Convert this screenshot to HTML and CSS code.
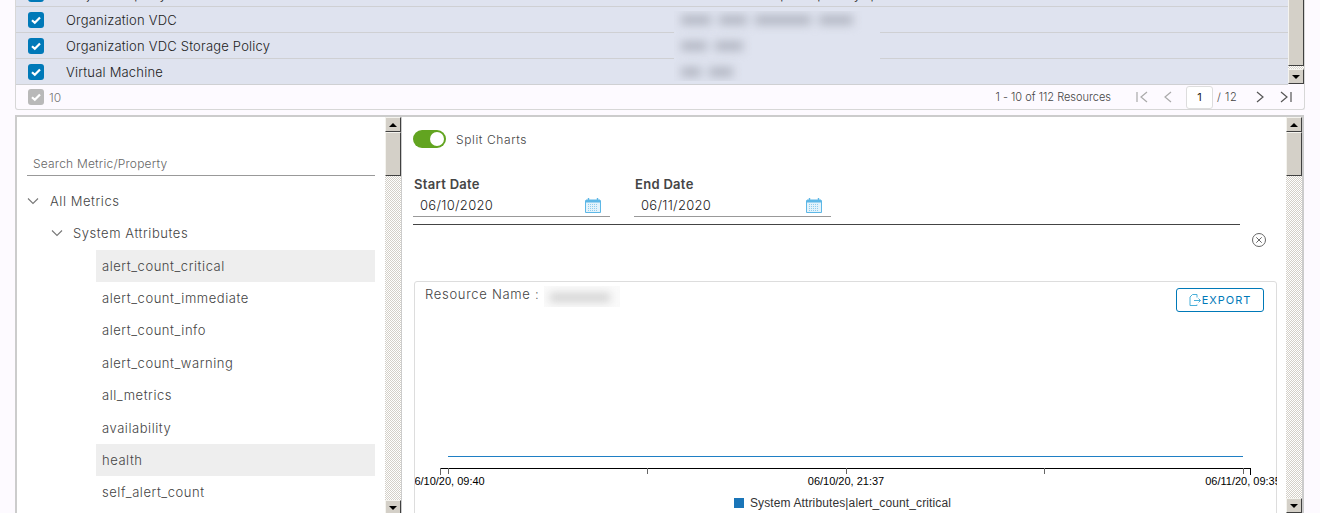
FILE: index.html
```html
<!DOCTYPE html>
<html lang="en">
<head>
    <meta charset="UTF-8">
    <title>Metrics</title>
    <link rel="stylesheet" href="styles.css">
</head>
<body>
    <svg class="defs" width="0" height="0">
        <symbol id="check" viewBox="0 0 16 16"><path d="M4 8.2l2.8 2.6L12 5.4" fill="none" stroke="#fff" stroke-width="2.2"/></symbol>
        <symbol id="cal" viewBox="0 0 16 15"><path d="M.5 2.5h15v12H.5z" fill="#e4f3fb" stroke="#5db7e6"/><path d="M1 1.5h14v3H1z" fill="#5db7e6"/><path d="M3.5 0v3M12.5 0v3" stroke="#5db7e6" stroke-width="1.4"/><path d="M3 6.5h10M3 8.5h10M3 10.5h10M3 12.5h10" stroke="#8ecdee" stroke-dasharray="1 1"/></symbol>
        <symbol id="down" viewBox="0 0 12 12"><path d="M1 3.5l5 5 5-5" fill="none" stroke="#777" stroke-width="1.1"/></symbol>
    </svg>

    <section class="grid">
        <div class="grid-main">
            <div class="rows">
                <div class="row">
                    <span class="check"><svg width="16" height="16"><use href="#check"/></svg></span>
                    <span class="row-name">Project Property</span>
                    <span class="row-value">vcloud_resource_pool_quantity_q</span>
                </div>
                <div class="row">
                    <span class="check"><svg width="16" height="16"><use href="#check"/></svg></span>
                    <span class="row-name">Organization VDC</span>
                </div>
                <div class="row">
                    <span class="check"><svg width="16" height="16"><use href="#check"/></svg></span>
                    <span class="row-name">Organization VDC Storage Policy</span>
                </div>
                <div class="row">
                    <span class="check"><svg width="16" height="16"><use href="#check"/></svg></span>
                    <span class="row-name">Virtual Machine</span>
                </div>
                <div class="redact">
                    <div class="smudges"><i class="w30"></i><i class="w28"></i><i class="w56"></i><i class="w34"></i></div>
                    <div class="smudges"><i class="w26"></i><i class="w28"></i></div>
                    <div class="smudges"><i class="w20"></i><i class="w24"></i></div>
                </div>
            </div>
            <div class="scrollbar grid-scroll">
                <div class="sb-thumb"></div>
                <div class="sb-track"></div>
                <div class="sb-btn"><span class="arrow-down"></span></div>
            </div>
        </div>
        <div class="grid-foot">
            <span class="check check-off"><svg width="16" height="16"><use href="#check"/></svg></span>
            <span class="foot-count">10</span>
            <span class="foot-range">1 - 10 of 112 Resources</span>
            <svg class="pg pg-first" width="14" height="14" viewBox="0 0 14 14"><path d="M2 2v10M12 2L6 7l6 5" fill="none" stroke="#aaa" stroke-width="1.2"/></svg>
            <svg class="pg pg-prev" width="14" height="14" viewBox="0 0 14 14"><path d="M10 2L4 7l6 5" fill="none" stroke="#aaa" stroke-width="1.2"/></svg>
            <span class="pg-input">1</span>
            <span class="pg-total">/ 12</span>
            <svg class="pg pg-next" width="14" height="14" viewBox="0 0 14 14"><path d="M4 2l6 5-6 5" fill="none" stroke="#555" stroke-width="1.2"/></svg>
            <svg class="pg pg-last" width="14" height="14" viewBox="0 0 14 14"><path d="M2 2l6 5-6 5M12 2v10" fill="none" stroke="#555" stroke-width="1.2"/></svg>
        </div>
    </section>

    <section class="panel">
        <aside class="tree-pane">
            <div class="search">Search Metric/Property</div>
            <div class="node node-root"><svg width="12" height="12"><use href="#down"/></svg>All Metrics</div>
            <div class="node node-sub"><svg width="12" height="12"><use href="#down"/></svg>System Attributes</div>
            <ul class="leaves">
                <li class="picked">alert_count_critical</li>
                <li>alert_count_immediate</li>
                <li>alert_count_info</li>
                <li>alert_count_warning</li>
                <li>all_metrics</li>
                <li>availability</li>
                <li class="picked">health</li>
                <li>self_alert_count</li>
            </ul>
        </aside>
        <div class="scrollbar tree-scroll">
            <div class="sb-btn"><span class="arrow-up"></span></div>
            <div class="sb-thumb"></div>
            <div class="sb-track"></div>
            <div class="sb-btn"><span class="arrow-down"></span></div>
        </div>

        <main class="chart-pane">
            <div class="toggle-row">
                <span class="toggle"><span class="knob"></span></span>
                <span class="toggle-label">Split Charts</span>
            </div>
            <div class="dates">
                <div class="date">
                    <label class="date-label">Start Date</label>
                    <div class="date-input">06/10/2020<svg width="16" height="15"><use href="#cal"/></svg></div>
                </div>
                <div class="date">
                    <label class="date-label">End Date</label>
                    <div class="date-input">06/11/2020<svg width="16" height="15"><use href="#cal"/></svg></div>
                </div>
            </div>
            <div class="rule"></div>
            <div class="close-row">
                <svg width="16" height="16" viewBox="0 0 16 16"><circle cx="8" cy="8" r="6.5" fill="none" stroke="#666"/><path d="M5.3 5.3l5.4 5.4M10.7 5.3l-5.4 5.4" stroke="#666"/></svg>
            </div>
            <div class="chart-card">
                <div class="chart-head">
                    <span class="res-name">Resource Name :</span>
                    <span class="res-blur"><i></i></span>
                    <button class="export">
                        <svg width="12" height="12" viewBox="0 0 12 12"><path d="M8 10.5v1H1V3l2.5-2.500H8v3M5 6.500h6.500M9.500 4.500l2 2-2 2" fill="none" stroke="#49afd9"/></svg>EXPORT
                    </button>
                </div>
                <svg class="chart" width="862" height="196" viewBox="0 0 862 196">
                    <path d="M33 140.500H828" stroke="#1f7fc4" fill="none"/>
                    <path d="M25 152.500H836" stroke="#000" stroke-width="1.200" fill="none"/>
                    <path d="M25.500 152v7M33.500 152v6M232.500 152v6M431.500 152v6M629.500 152v6M828.500 152v6" stroke="#666" fill="none"/>
                    <path d="M835.500 152v7" stroke="#000" fill="none"/>
                    <text x="31.500" y="169" text-anchor="middle" class="tick">06/10/20, 09:40</text>
                    <text x="431" y="169" text-anchor="middle" class="tick">06/10/20, 21:37</text>
                    <text x="828" y="169" text-anchor="middle" class="tick">06/11/20, 09:35</text>
                </svg>
                <div class="legend"><span class="swatch"></span>System Attributes|alert_count_critical</div>
            </div>
        </main>
        <div class="scrollbar chart-scroll">
            <div class="sb-btn"><span class="arrow-up"></span></div>
            <div class="sb-thumb"></div>
            <div class="sb-track"></div>
            <div class="sb-btn"><span class="arrow-down"></span></div>
        </div>
    </section>
</body>
</html>
```

FILE: styles.css
```css
html, body {
    height: 513px;
    overflow: hidden;
}

body {
    margin: 0;
    background: #fdfaff;
    font-family: "Inter", "Liberation Sans", sans-serif;
    font-size: 13px;
    color: #444;
}

.defs {
    position: absolute;
}

/* top grid */
.grid {
    width: 1290px;
    margin: -19px 0 0 15px;
    box-sizing: border-box;
    border-left: 1px solid #d7d7d7;
    border-right: 1px solid #d7d7d7;
    border-bottom: 1px solid #d7d7d7;
    border-radius: 0 0 3px 3px;
}

.grid-main {
    display: flex;
    height: 104px;
}

.rows {
    position: relative;
    flex: 1;
    background: #dfe3ef;
}

.row {
    display: flex;
    align-items: center;
    height: 26px;
    box-sizing: border-box;
    padding-left: 12px;
    border-bottom: 1px solid #cfd0d3;
    color: #222;
    font-weight: 300;
}

.row-name {
    margin-left: 22px;
    width: 608px;
    white-space: nowrap;
    letter-spacing: .2px;
}

.row-value {
    white-space: nowrap;
}

.check {
    display: block;
    width: 16px;
    height: 16px;
    flex: none;
    background: #0079b8;
    border-radius: 3px;
}

.check svg {
    display: block;
}

.check-off {
    background: #b9b9b9;
}

/* blurred out values */
.redact {
    position: absolute;
    left: 658px;
    top: 30px;
    width: 206px;
    height: 70px;
    background: #dfe3ef;
    overflow: hidden;
}

.smudges {
    display: flex;
    gap: 8px;
    height: 26px;
    align-items: center;
    padding-left: 7px;
    filter: blur(5px);
}

.smudges:first-child {
    margin-top: -4px;
}

.smudges i {
    display: block;
    height: 10px;
    background: #b4b8c4;
}

.w20 { width: 20px; }
.w24 { width: 24px; }
.w26 { width: 26px; }
.w28 { width: 28px; }
.w30 { width: 30px; }
.w34 { width: 34px; }
.w56 { width: 56px; }

.grid-foot {
    display: flex;
    align-items: center;
    height: 24px;
    padding-left: 12px;
    font-size: 11px;
    font-weight: 300;
    color: #444;
}

.foot-count {
    margin-left: 5px;
    font-size: 12px;
    color: #777;
}

.foot-range {
    margin-left: auto;
    margin-right: 24px;
}

.pg {
    flex: none;
    margin-right: 12px;
}

.pg-prev {
    margin-right: 5px;
}

.pg-input {
    width: 27px;
    height: 23px;
    margin: 0 4px 0 6px;
    box-sizing: border-box;
    background: #fff;
    border: 1px solid #ddd;
    border-radius: 3px;
    color: #222;
    font-weight: 400;
    text-align: center;
    line-height: 21px;
}

.pg-total {
    width: 28px;
    margin-right: 8px;
    letter-spacing: .6px;
}

.pg-last {
    margin-right: 11px;
}

/* windows style scrollbars */
.scrollbar {
    display: flex;
    flex-direction: column;
    flex: none;
    width: 16px;
}

.sb-btn,
.sb-thumb {
    box-sizing: border-box;
    flex: none;
    background: #d4d0c8;
    border-top: 1px solid #f4f3ee;
    border-left: 1px solid #f4f3ee;
    border-right: 1px solid #404040;
    border-bottom: 1px solid #404040;
}

.sb-btn {
    display: flex;
    align-items: center;
    justify-content: center;
    height: 15px;
}

.sb-track {
    flex: 1;
    background: repeating-conic-gradient(#d4d0c8 0 25%, #fff 0 50%) 0 0 / 2px 2px;
}

.arrow-up,
.arrow-down {
    width: 0;
    height: 0;
    border-left: 4px solid transparent;
    border-right: 4px solid transparent;
}

.arrow-up {
    border-bottom: 4px solid #000;
}

.arrow-down {
    border-top: 4px solid #000;
}

.grid-scroll {
    height: 103px;
}

.grid-scroll .sb-thumb {
    height: 85px;
}

.tree-scroll .sb-thumb,
.chart-scroll .sb-thumb {
    height: 44px;
}

/* bottom panel */
.panel {
    display: flex;
    width: 1289px;
    height: 399px;
    margin: 5px 0 0 15px;
    box-sizing: border-box;
    background: #fff;
    border-top: 2px solid #ccc;
    border-left: 2px solid #ccc;
    border-right: 2px solid #ccc;
}

.tree-pane {
    width: 368px;
    flex: none;
    box-sizing: border-box;
    padding: 34px 10px 0;
    color: #444;
    font-weight: 300;
    letter-spacing: .55px;
}

.search {
    height: 25px;
    box-sizing: border-box;
    padding: 5px 0 0 6px;
    border-bottom: 1px solid #999;
    color: #666;
    font-size: 12px;
    letter-spacing: .2px;
}

.node {
    display: flex;
    align-items: center;
    gap: 11px;
    height: 32px;
}

.node-root {
    margin-top: 9px;
    padding-left: 0;
}

.node-sub {
    padding-left: 24px;
    gap: 10px;
}

.leaves {
    list-style: none;
    margin: .7px 0 0 69px;
    padding: 0;
}

.leaves li {
    height: 32.400px;
    line-height: 32.400px;
    padding-left: 6px;
}

.leaves .picked {
    background: #eee;
}

.tree-scroll {
    height: 398px;
    border-right: 1px solid #ccc;
}

.chart-pane {
    flex: 1;
    min-width: 0;
    box-sizing: border-box;
    padding: 13px 10px 0 11px;
}

.toggle-row {
    display: flex;
    align-items: center;
    gap: 10px;
    height: 18px;
}

.toggle {
    display: flex;
    justify-content: flex-end;
    align-items: center;
    width: 33px;
    height: 18px;
    box-sizing: border-box;
    padding-right: 2px;
    background: #62a420;
    border-radius: 9px;
}

.knob {
    width: 14px;
    height: 14px;
    background: #fff;
    border-radius: 50%;
}

.toggle-label {
    font-size: 12px;
    font-weight: 300;
    color: #444;
    letter-spacing: .6px;
}

.dates {
    display: flex;
    gap: 24px;
    margin-top: 29px;
}

.date {
    width: 197px;
}

.date-label {
    display: block;
    padding-left: 1px;
    height: 15px;
    line-height: 14px;
    font-weight: 600;
    color: #454545;
    letter-spacing: .3px;
}

.date-input {
    display: flex;
    align-items: center;
    justify-content: space-between;
    height: 25px;
    box-sizing: border-box;
    padding: 2px 9px 0 7px;
    border-bottom: 1px solid #999;
    color: #222;
    font-weight: 300;
    letter-spacing: .3px;
}

.rule {
    width: 827px;
    height: 1px;
    margin-top: 7px;
    background: #444;
}

.close-row {
    display: flex;
    justify-content: flex-end;
    height: 56px;
    padding: 7px 9px 0 0;
    box-sizing: border-box;
}

.chart-card {
    width: 863px;
    height: 240px;
    margin-left: 1px;
    box-sizing: border-box;
    border: 1px solid #ddd;
    border-radius: 3px;
}

.chart-head {
    display: flex;
    height: 34px;
    padding: 4px 12px 0 10px;
    box-sizing: border-box;
}

.res-name {
    color: #444;
    font-weight: 300;
    letter-spacing: .7px;
}

.res-blur {
    display: block;
    width: 76px;
    height: 21px;
    margin: 0 0 0 5px;
    background: #fafafa;
    overflow: hidden;
}

.res-blur i {
    display: block;
    width: 60px;
    height: 9px;
    margin: 7px 0 0 6px;
    background: #d2d2d2;
    filter: blur(4px);
}

.export {
    display: flex;
    align-items: center;
    justify-content: center;
    gap: 1px;
    width: 88px;
    height: 24px;
    margin: 2px 0 0 auto;
    padding: 0;
    background: #fff;
    border: 1px solid #0079b8;
    border-radius: 3px;
    color: #0079b8;
    font-family: inherit;
    font-size: 11px;
    letter-spacing: 1px;
}

.chart {
    display: block;
}

.tick {
    font-family: "Liberation Sans", sans-serif;
    font-size: 11px;
    fill: #000;
}

.legend {
    display: flex;
    align-items: center;
    justify-content: center;
    gap: 6px;
    margin: -16px 0 0 -6px;
    font-family: "Liberation Sans", sans-serif;
    font-size: 12px;
    letter-spacing: .12px;
    color: #333;
}

.swatch {
    width: 10px;
    height: 10px;
    background: #1a75b8;
}

.chart-scroll {
    height: 396px;
    margin-left: auto;
}
```
